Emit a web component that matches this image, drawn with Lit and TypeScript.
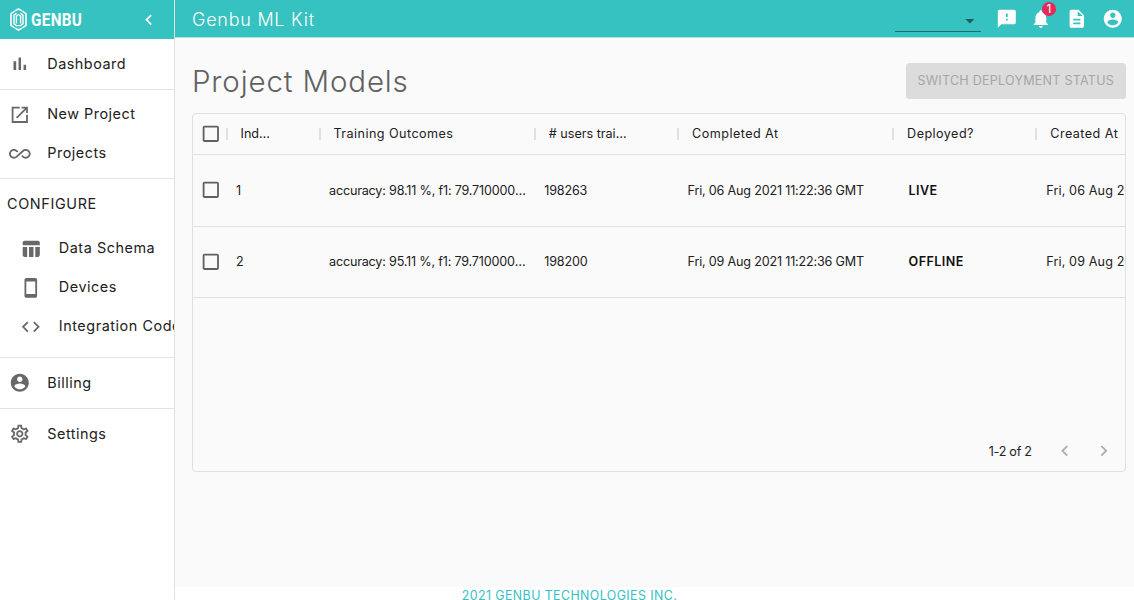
import { LitElement, html, css, svg } from "lit";
import { customElement, property } from "lit/decorators.js";

const ICONS: Record<string, string> = {
  chart: "M5 9.2h3V19H5zM10.6 5h2.8v14h-2.8zm5.6 8H19v6h-2.8z",
  launch: "M19 19H5V5h7V3H3v18h18v-9h-2v7zM14 3v2h3.59l-9.83 9.83 1.41 1.41L19 6.41V10h2V3h-7z",
  infinity: "M18.6 6.62c-1.44 0-2.8.56-3.77 1.53L7.8 14.39c-.64.64-1.49.99-2.4.99-1.87 0-3.39-1.51-3.39-3.38S3.53 8.62 5.4 8.62c.91 0 1.76.35 2.44 1.03l1.13 1 1.51-1.34L9.22 8.2C8.2 7.18 6.84 6.62 5.4 6.62 2.42 6.62 0 9.04 0 12s2.42 5.38 5.4 5.38c1.44 0 2.8-.56 3.77-1.53l7.03-6.24c.64-.64 1.49-.99 2.4-.99 1.87 0 3.39 1.51 3.39 3.38s-1.52 3.38-3.39 3.38c-.9 0-1.76-.35-2.44-1.03l-1.14-1.01-1.51 1.34 1.27 1.12c1.02 1.01 2.37 1.57 3.82 1.57 2.98 0 5.4-2.41 5.4-5.38s-2.42-5.37-5.4-5.37z",
  table: "M10 10.02h5V21h-5V10.02zM17 21h3c1.1 0 2-.9 2-2v-9h-5v11zm3-18H5c-1.1 0-2 .9-2 2v3h19V5c0-1.1-.9-2-2-2zM3 19c0 1.1.9 2 2 2h3V10H3v9z",
  phone: "M17 1.01L7 1c-1.1 0-2 .9-2 2v18c0 1.1.9 2 2 2h10c1.1 0 2-.9 2-2V3c0-1.1-.9-1.99-2-1.99zM17 19H7V5h10v14z",
  code: "M9.4 16.6L4.8 12l4.6-4.6L8 6l-6 6 6 6 1.4-1.4zm5.2 0l4.6-4.6-4.6-4.6L16 6l6 6-6 6-1.4-1.4z",
  account: "M12 2C6.48 2 2 6.48 2 12s4.48 10 10 10 10-4.48 10-10S17.52 2 12 2zm0 3c1.66 0 3 1.34 3 3s-1.34 3-3 3-3-1.34-3-3 1.34-3 3-3zm0 14.2c-2.5 0-4.71-1.28-6-3.22.03-1.99 4-3.08 6-3.08 1.99 0 5.97 1.09 6 3.08-1.29 1.94-3.5 3.22-6 3.22z",
  gear: "M19.43 12.98c.04-.32.07-.64.07-.98 0-.34-.03-.66-.07-.98l2.11-1.65c.19-.15.24-.42.12-.64l-2-3.46c-.09-.16-.26-.25-.44-.25-.06 0-.12.01-.17.03l-2.49 1c-.52-.4-1.08-.73-1.69-.98l-.38-2.65C14.46 2.18 14.25 2 14 2h-4c-.25 0-.46.18-.49.42l-.38 2.65c-.61.25-1.17.59-1.69.98l-2.49-1c-.06-.02-.12-.03-.18-.03-.17 0-.34.09-.43.25l-2 3.46c-.13.22-.07.49.12.64l2.11 1.65c-.04.32-.07.65-.07.98 0 .33.03.66.07.98l-2.11 1.65c-.19.15-.24.42-.12.64l2 3.46c.09.16.26.25.44.25.06 0 .12-.01.17-.03l2.49-1c.52.4 1.08.73 1.69.98l.38 2.65c.03.24.24.42.49.42h4c.25 0 .46-.18.49-.42l.38-2.65c.61-.25 1.17-.59 1.69-.98l2.49 1c.06.02.12.03.18.03.17 0 .34-.09.43-.25l2-3.46c.12-.22.07-.49-.12-.64l-2.11-1.65zm-1.98-1.71c.04.31.05.52.05.73 0 .21-.02.43-.05.73l-.14 1.13.89.7 1.08.84-.7 1.21-1.27-.51-1.04-.42-.9.68c-.43.32-.84.56-1.25.73l-1.06.43-.16 1.13-.2 1.35h-1.4l-.19-1.35-.16-1.13-1.06-.43c-.43-.18-.83-.41-1.23-.71l-.91-.7-1.06.43-1.27.51-.7-1.21 1.08-.84.89-.7-.14-1.13c-.03-.31-.05-.54-.05-.74s.02-.43.05-.73l.14-1.13-.89-.7-1.08-.84.7-1.21 1.27.51 1.04.42.9-.68c.43-.32.84-.56 1.25-.73l1.06-.43.16-1.13.2-1.35h1.39l.19 1.35.16 1.13 1.06.43c.43.18.83.41 1.23.71l.91.7 1.06-.43 1.27-.51.7 1.21-1.07.85-.89.7.14 1.13zM12 8c-2.21 0-4 1.79-4 4s1.79 4 4 4 4-1.79 4-4-1.79-4-4-4zm0 6c-1.1 0-2-.9-2-2s.9-2 2-2 2 .9 2 2-.9 2-2 2z",
  left: "M15.41 7.41L14 6l-6 6 6 6 1.41-1.41L10.83 12z",
  right: "M10 6L8.59 7.41 13.17 12l-4.58 4.59L10 18l6-6z",
  drop: "M7 10l5 5 5-5z",
  feedback: "M20 2H4c-1.1 0-1.99.9-1.99 2L2 22l4-4h14c1.1 0 2-.9 2-2V4c0-1.1-.9-2-2-2zm-7 12h-2v-2h2v2zm0-4h-2V6h2v4z",
  bell: "M12 22c1.1 0 2-.9 2-2h-4c0 1.1.89 2 2 2zm6-6v-5c0-3.07-1.64-5.64-4.5-6.32V4c0-.83-.67-1.5-1.5-1.5s-1.5.67-1.5 1.5v.68C7.63 5.36 6 7.92 6 11v5l-2 2v1h16v-1l-2-2z",
  doc: "M14 2H6c-1.1 0-1.99.9-1.99 2L4 20c0 1.1.89 2 1.99 2H18c1.1 0 2-.9 2-2V8l-6-6zm2 16H8v-2h8v2zm0-4H8v-2h8v2zm-3-5V3.5L18.5 9H13z",
  box: "M19 5v14H5V5h14m0-2H5c-1.1 0-2 .9-2 2v14c0 1.1.9 2 2 2h14c1.1 0 2-.9 2-2V5c0-1.1-.9-2-2-2z",
};

@customElement("g-icon")
class GIcon extends LitElement {
  @property() name = "";
  static styles = css`
    :host { display: block; width: 21.6px; height: 21.6px; flex: none; }
    svg { display: block; width: 100%; height: 100%; fill: currentColor; }
  `;
  render() {
    return html`<svg viewBox="0 0 24 24">${svg`<path d=${ICONS[this.name]}></path>`}</svg>`;
  }
}

@customElement("side-nav")
class SideNav extends LitElement {
  static styles = css`
    :host { display: flex; flex-direction: column; width: 174px; flex: none; background: #fff; border-right: 1px solid #e0e0e0; overflow: hidden; }
    .brand { height: 39px; flex: none; background: #36c2c0; color: #fff; display: flex; align-items: center; padding: 0 14px 0 9px; }
    .mark { width: 19px; height: 23px; fill: none; stroke: #fff; }
    .word { font-family: Roboto, sans-serif; font-size: 17.5px; font-weight: 700; line-height: 20px; margin-left: 3px; flex: 1; letter-spacing: 0.4px; transform: scaleX(0.87); transform-origin: left; }
    section { border-bottom: 1px solid #e3e3e3; }
    section:last-child { border-bottom: 0; }
    .single { padding: 5.5px 0; }
    .pair { padding: 5px 0; }
    .config { padding-bottom: 11px; }
    .item { height: 39px; display: flex; align-items: center; padding-left: 9px; gap: 16.7px; color: #212121; font-size: 14.4px; letter-spacing: 0.5px; white-space: nowrap; }
    .item span { padding-bottom: 2px; }
    .config .item { padding-left: 20px; gap: 17.2px; letter-spacing: 0.55px; }
    .item g-icon { color: #686868; }
    h2 { margin: 0; height: 50px; line-height: 50px; padding-left: 7px; font-size: 14.4px; font-weight: 400; letter-spacing: 0.65px; color: #212121; }
  `;
  item(icon: string, label: string) {
    return html`<div class="item"><g-icon name=${icon}></g-icon><span>${label}</span></div>`;
  }
  render() {
    return html`
      <div class="brand">
        <svg class="mark" viewBox="0 0 19 23">
          <path stroke-width="1.6" d="M5.6 3.2 2 5.6v11.8l3.6 2.4M13.4 3.2 17 5.6v11.8l-3.6 2.4M6 2.9 9.5 1l3.5 1.9M6 20.1l3.5 1.9 3.5-1.9"></path>
          <path stroke-width="1.4" d="M7.6 5.2 5 7.2v8.6l2.4 1.7M11.4 5.2 14 7.2v8.6l-2.4 1.7M7.4 15.4V8l2.1-1.5L11.6 8v7.4M7 17.6h5"></path>
        </svg>
        <span class="word">GENBU</span>
        <g-icon name="left"></g-icon>
      </div>
      <section class="single">${this.item("chart", "Dashboard")}</section>
      <section class="pair">${this.item("launch", "New Project")}${this.item("infinity", "Projects")}</section>
      <section class="config">
        <h2>CONFIGURE</h2>
        ${this.item("table", "Data Schema")}${this.item("phone", "Devices")}${this.item("code", "Integration Code")}
      </section>
      <section class="single">${this.item("account", "Billing")}</section>
      <section class="single">${this.item("gear", "Settings")}</section>
    `;
  }
}

@customElement("model-table")
class ModelTable extends LitElement {
  static styles = css`
    :host { display: flex; flex-direction: column; height: 357px; border: 1px solid #e0e0e0; border-radius: 4px; overflow: hidden; color: #212121; font-size: 12.6px; }
    .row { display: grid; grid-template-columns: 34px 93px 215.3px 143.3px 215px 143.2px 215px; height: 70.5px; align-items: center; border-bottom: 1px solid #e0e0e0; flex: none; }
    .head { height: 40px; }
    .row > * { white-space: nowrap; overflow: hidden; text-overflow: ellipsis; padding: 1px 9px 0; line-height: 20px; letter-spacing: -0.19px; }
    .row > .check { padding: 0 0 0 7px; overflow: visible; color: #5f5f5f; }
    .head > .title { padding: 0 50px 0 13px; border-left: 2px solid #e0e0e0; margin-left: -1.5px; height: 12px; overflow: visible; display: flex; align-items: center; letter-spacing: 0; }
    .title span { line-height: 20px; overflow: hidden; text-overflow: ellipsis; }
    .head > .wide { padding-right: 0; letter-spacing: 0.45px; }
    .row > .status { padding-left: 15px; font-weight: 600; color: #111; letter-spacing: 0.4px; }
    .row > .created { padding-left: 9.5px; letter-spacing: 0.12px; }
    .foot { margin-top: auto; height: 40px; display: flex; align-items: center; justify-content: flex-end; padding-right: 9.5px; letter-spacing: -0.25px; }
    .foot g-icon { color: #acacac; }
    .prev { margin: 0 17.5px 0 22.5px; }
  `;
  titles = ["Index", "Training Outcomes", "# users trained", "Completed At", "Deployed?", "Created At"];
  rows = [
    ["1", "accuracy: 98.11 %, f1: 79.71000000000001 %", "198263", "Fri, 06 Aug 2021 11:22:36 GMT", "LIVE", "Fri, 06 Aug 2021 11:22:36 GMT"],
    ["2", "accuracy: 95.11 %, f1: 79.71000000000001 %", "198200", "Fri, 09 Aug 2021 11:22:36 GMT", "OFFLINE", "Fri, 09 Aug 2021 11:22:36 GMT"],
  ];
  render() {
    return html`
      <div class="row head">
        <div class="check"><g-icon name="box"></g-icon></div>
        ${this.titles.map((t, i) => html`<div class="title ${i === 0 || i === 2 ? "" : "wide"}"><span>${t}</span></div>`)}
      </div>
      ${this.rows.map((r) => html`<div class="row">
        <div class="check"><g-icon name="box"></g-icon></div>
        ${r.map((c, i) => html`<div class=${i === 4 ? "status" : i === 5 ? "created" : "cell"}>${c}</div>`)}
      </div>`)}
      <div class="foot"><span>1-2 of 2</span><g-icon class="prev" name="left"></g-icon><g-icon name="right"></g-icon></div>
    `;
  }
}

@customElement("app-root")
class AppRoot extends LitElement {
  static styles = css`
    :host { display: flex; width: 1134px; height: 600px; overflow: hidden; background: #fff; font-family: Inter, "Open Sans", sans-serif; }
    .page { flex: 1; min-width: 0; display: flex; flex-direction: column; }
    .bar { height: 37px; flex: none; background: #36c2c0; color: #fff; display: flex; align-items: center; padding: 0 10px 0 17px; border-bottom: 1px solid #a9e6e4; box-sizing: content-box; }
    .name { flex: 1; font-size: 18px; letter-spacing: 0.75px; font-weight: 300; padding-top: 1px; }
    .select { width: 86px; height: 22px; margin: 4px 15.7px 0 0; padding-top: 2px; border-bottom: 1px solid #1d6e6c; display: flex; justify-content: flex-end; align-items: center; color: #1c5c5b; box-sizing: border-box; }
    .actions { display: flex; gap: 14.8px; }
    .bell { position: relative; margin-left: -3.2px; }
    .badge { position: absolute; right: -5px; top: -6px; width: 14.5px; height: 14.5px; border-radius: 50%; background: #e62958; font-size: 12px; line-height: 14.5px; text-align: center; }
    main { flex: 1; background: #fafafa; padding: 25px 8.5px 0 17px; }
    .top { display: flex; justify-content: space-between; height: 36px; margin-bottom: 14px; }
    h1 { margin: 0; font-size: 29.5px; line-height: 36px; font-weight: 300; color: #616161; letter-spacing: 0.85px; }
    button { border: 0; border-radius: 3.5px; background: #dcdcdc; color: #a6a6a6; font: 400 12.6px Inter, sans-serif; letter-spacing: 0.22px; width: 219.5px; height: 36px; padding: 0 0 1px; }
    footer { height: 13px; flex: none; background: #fff; color: #36c2c0; text-align: center; font-size: 12.4px; line-height: 17px; letter-spacing: 0.42px; padding-right: 170px; }
  `;
  render() {
    return html`
      <side-nav></side-nav>
      <div class="page">
        <header class="bar">
          <span class="name">Genbu ML Kit</span>
          <div class="select"><g-icon name="drop"></g-icon></div>
          <div class="actions">
            <g-icon name="feedback"></g-icon>
            <div class="bell"><g-icon name="bell"></g-icon><span class="badge">1</span></div>
            <g-icon name="doc"></g-icon>
            <g-icon name="account"></g-icon>
          </div>
        </header>
        <main>
          <div class="top"><h1>Project Models</h1><button disabled>SWITCH DEPLOYMENT STATUS</button></div>
          <model-table></model-table>
        </main>
        <footer>2021 GENBU TECHNOLOGIES INC.</footer>
      </div>
    `;
  }
}
